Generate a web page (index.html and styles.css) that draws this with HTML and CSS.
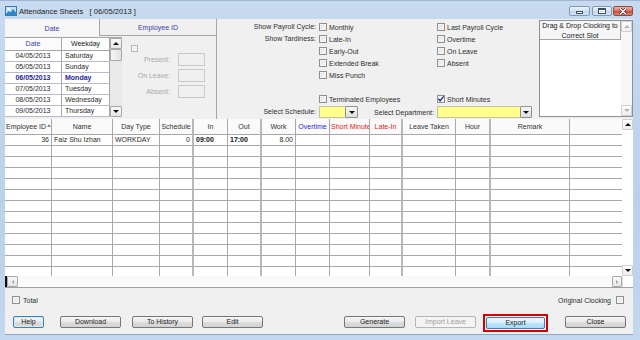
FILE: index.html
```html
<!DOCTYPE html>
<html lang="en">
<head>
<meta charset="utf-8">
<title>Attendance Sheets</title>
<link rel="stylesheet" href="styles.css">
</head>
<body>
<div class="window">
  <div class="titlebar">
    <svg class="app-icon" width="12" height="10" viewBox="0 0 12 10">
      <rect x="0.5" y="0.5" width="11" height="9" fill="#bfe0f6" stroke="#3a78b5"/>
      <path d="M1 8 L3.5 5 L5.5 6.5 L8 3 L11 6.5 L11 9.5 L1 9.5 Z" fill="#2f86c8"/>
      <circle cx="3.5" cy="3" r="1.2" fill="#ffffff"/>
    </svg>
    <span class="title-text">Attendance Sheets   [ 06/05/2013 ]</span>
    <div class="caption-buttons">
      <span class="cap-btn cap-min"><i></i></span>
      <span class="cap-btn cap-max"><i></i></span>
      <span class="cap-btn cap-close">
        <svg width="8" height="7" viewBox="0 0 8 7"><path d="M1 0.5 L7 6.5 M7 0.5 L1 6.5" stroke="#5a2020" stroke-width="2.6"/><path d="M1 0.5 L7 6.5 M7 0.5 L1 6.5" stroke="#ffffff" stroke-width="1.4"/></svg>
      </span>
    </div>
  </div>

  <div class="client">
    <div class="top">
      <div class="tabpanel">
        <div class="tabs">
          <div class="tab tab-active">Date</div>
          <div class="tab tab-idle">Employee ID</div>
        </div>
        <div class="tabbody">
          <div class="datelist">
            <div class="dates">
              <span class="dh dh-date">Date</span><span class="dh">Weekday</span>
              <span class="dd">04/05/2013</span><span class="dw">Saturday</span>
              <span class="dd">05/05/2013</span><span class="dw">Sunday</span>
              <span class="dd sel">06/05/2013</span><span class="dw sel">Monday</span>
              <span class="dd">07/05/2013</span><span class="dw">Tuesday</span>
              <span class="dd">08/05/2013</span><span class="dw">Wednesday</span>
              <span class="dd">09/05/2013</span><span class="dw">Thursday</span>
            </div>
            <div class="list-sb">
              <span class="sb-btn dark"><i class="tri-up"></i></span>
              <span class="sb-thumb"></span>
              <span class="sb-fill"></span>
              <span class="sb-btn dark"><i class="tri-down"></i></span>
            </div>
          </div>
          <div class="emppanel">
            <span class="box box-disabled emp-check"></span>
            <div class="emp-fields">
              <span class="emp-label">Present:</span><span class="emp-box"></span>
              <span class="emp-label">On Leave:</span><span class="emp-box"></span>
              <span class="emp-label">Absent:</span><span class="emp-box"></span>
            </div>
          </div>
        </div>
      </div>

      <div class="filters">
        <span class="f-label">Show Payroll Cycle:</span>
        <label class="chk"><span class="box"></span>Monthly</label>
        <label class="chk"><span class="box"></span>Last Payroll Cycle</label>

        <span class="f-label">Show Tardiness:</span>
        <label class="chk"><span class="box"></span>Late-In</label>
        <label class="chk"><span class="box"></span>Overtime</label>

        <span></span>
        <label class="chk"><span class="box"></span>Early-Out</label>
        <label class="chk"><span class="box"></span>On Leave</label>

        <span></span>
        <label class="chk"><span class="box"></span>Extended Break</label>
        <label class="chk"><span class="box"></span>Absent</label>

        <span></span>
        <label class="chk"><span class="box"></span>Miss Punch</label>
        <span></span>

        <span></span><span></span><span></span>

        <span></span>
        <label class="chk"><span class="box"></span>Terminated Employees</label>
        <label class="chk"><span class="box checked"><svg width="8" height="8" viewBox="0 0 8 8"><path d="M1.4 3.8 L3.1 5.8 L6.6 1.4" fill="none" stroke="#1d3f8f" stroke-width="1.4"/></svg></span>Short Minutes</label>

        <span class="f-label f-last">Select Schedule:</span>
        <div class="sched-cell">
          <span class="combo combo-sched"><span class="combo-field"></span><span class="combo-btn"><i class="tri-down"></i></span></span>
          <span class="dept-label">Select Department:</span>
        </div>
        <div class="dept-cell">
          <span class="combo combo-dept"><span class="combo-field"></span><span class="combo-btn"><i class="tri-down"></i></span></span>
        </div>
      </div>

      <div class="dragdrop">
        <div class="ddbox">
          <div class="ddmain">
            <div class="ddhead">Drag &amp; Drop Clocking to<br>Correct Slot</div>
          </div>
          <div class="ddsb">
            <span class="sb-btn light"><i class="tri-up tri-gray"></i></span>
            <span class="sb-btn light"><i class="tri-down tri-gray"></i></span>
          </div>
        </div>
      </div>
    </div>

    <div class="gridwrap">
      <div class="grid-area">
        <div class="grid">
          <div class="g-row g-head">
            <span class="h-left">Employee ID<i class="sort"></i></span>
            <span>Name</span>
            <span>Day Type</span>
            <span class="sep">Schedule</span>
            <span>In</span>
            <span class="sep">Out</span>
            <span>Work</span>
            <span class="c-blue">Overtime</span>
            <span class="c-red">Short Minute</span>
            <span class="sep c-red">Late-In</span>
            <span>Leave Taken</span>
            <span class="sep">Hour</span>
            <span>Remark</span>
            <span class="last"></span>
          </div>
          <div class="g-row">
            <span class="r">36</span>
            <span>Faiz Shu Izhan</span>
            <span>WORKDAY</span>
            <span class="sep r">0</span>
            <span class="b">09:00</span>
            <span class="sep b">17:00</span>
            <span class="r">8.00</span>
            <span></span><span></span><span class="sep"></span><span></span><span class="sep"></span><span></span><span class="last"></span>
          </div>
          <div class="g-row"><span></span><span></span><span></span><span class="sep"></span><span></span><span class="sep"></span><span></span><span></span><span></span><span class="sep"></span><span></span><span class="sep"></span><span></span><span class="last"></span></div>
          <div class="g-row"><span></span><span></span><span></span><span class="sep"></span><span></span><span class="sep"></span><span></span><span></span><span></span><span class="sep"></span><span></span><span class="sep"></span><span></span><span class="last"></span></div>
          <div class="g-row"><span></span><span></span><span></span><span class="sep"></span><span></span><span class="sep"></span><span></span><span></span><span></span><span class="sep"></span><span></span><span class="sep"></span><span></span><span class="last"></span></div>
          <div class="g-row"><span></span><span></span><span></span><span class="sep"></span><span></span><span class="sep"></span><span></span><span></span><span></span><span class="sep"></span><span></span><span class="sep"></span><span></span><span class="last"></span></div>
          <div class="g-row"><span></span><span></span><span></span><span class="sep"></span><span></span><span class="sep"></span><span></span><span></span><span></span><span class="sep"></span><span></span><span class="sep"></span><span></span><span class="last"></span></div>
          <div class="g-row"><span></span><span></span><span></span><span class="sep"></span><span></span><span class="sep"></span><span></span><span></span><span></span><span class="sep"></span><span></span><span class="sep"></span><span></span><span class="last"></span></div>
          <div class="g-row"><span></span><span></span><span></span><span class="sep"></span><span></span><span class="sep"></span><span></span><span></span><span></span><span class="sep"></span><span></span><span class="sep"></span><span></span><span class="last"></span></div>
          <div class="g-row"><span></span><span></span><span></span><span class="sep"></span><span></span><span class="sep"></span><span></span><span></span><span></span><span class="sep"></span><span></span><span class="sep"></span><span></span><span class="last"></span></div>
          <div class="g-row"><span></span><span></span><span></span><span class="sep"></span><span></span><span class="sep"></span><span></span><span></span><span></span><span class="sep"></span><span></span><span class="sep"></span><span></span><span class="last"></span></div>
          <div class="g-row"><span></span><span></span><span></span><span class="sep"></span><span></span><span class="sep"></span><span></span><span></span><span></span><span class="sep"></span><span></span><span class="sep"></span><span></span><span class="last"></span></div>
          <div class="g-row"><span></span><span></span><span></span><span class="sep"></span><span></span><span class="sep"></span><span></span><span></span><span></span><span class="sep"></span><span></span><span class="sep"></span><span></span><span class="last"></span></div>
          <div class="g-row"><span></span><span></span><span></span><span class="sep"></span><span></span><span class="sep"></span><span></span><span></span><span></span><span class="sep"></span><span></span><span class="sep"></span><span></span><span class="last"></span></div>
          <div class="g-row"><span></span><span></span><span></span><span class="sep"></span><span></span><span class="sep"></span><span></span><span></span><span></span><span class="sep"></span><span></span><span class="sep"></span><span></span><span class="last"></span></div>
        </div>
        <div class="grid-sb">
          <span class="sb-btn light"><i class="tri-up"></i></span>
          <span class="sb-btn light"><i class="tri-down"></i></span>
        </div>
      </div>
      <div class="hscroll">
        <span class="h-thumb"></span>
        <span class="sb-btn hbtn"><i class="tri-left"></i></span>
        <span class="h-track"></span>
        <span class="sb-btn hbtn hbtn-right"><i class="tri-right"></i></span>
        <span class="h-corner"></span>
      </div>
    </div>

    <div class="options">
      <label class="chk opt-total"><span class="box"></span>Total</label>
      <label class="chk opt-orig">Original Clocking<span class="box"></span></label>
    </div>

    <div class="buttons">
      <button class="btn btn-help">Help</button>
      <button class="btn btn-download">Download</button>
      <button class="btn btn-history">To History</button>
      <button class="btn btn-edit">Edit</button>
      <button class="btn btn-generate">Generate</button>
      <button class="btn btn-import" disabled>Import Leave</button>
      <span class="export-mark"><button class="btn btn-export">Export</button></span>
      <button class="btn btn-close">Close</button>
    </div>
  </div>
</div>
</body>
</html>
```
FILE: styles.css
```css
* { box-sizing: border-box; }
html, body { margin: 0; padding: 0; }
body {
  width: 640px;
  height: 340px;
  overflow: hidden;
  font-family: "Liberation Sans", Arial, sans-serif;
  font-size: 7px;
  color: #2a2a2a;
  background: #bcd2ea;
}

.window {
  width: 640px;
  height: 340px;
  display: flex;
  flex-direction: column;
  background: linear-gradient(#c7daf0, #bbd1ea 60%, #c3d7ee);
}

/* title bar */
.titlebar {
  height: 19px;
  display: flex;
  align-items: center;
  padding-left: 5px;
  border-top: 1px solid #9fb6d2;
}
.app-icon { display: block; margin-top: 2px; }
.title-text {
  margin-left: 2px;
  margin-top: 3px;
  font-size: 7.6px;
  color: #1b1b1b;
  white-space: pre;
}
.caption-buttons {
  margin-left: auto;
  margin-right: 7px;
  align-self: flex-start;
  margin-top: 5px;
  display: flex;
}
.cap-btn {
  height: 10px;
  width: 20px;
  border: 1px solid #7e98ba;
  border-radius: 2px;
  background: linear-gradient(#eef3fa, #d3e1f2 50%, #c3d5ec 51%, #d4e3f4);
  display: flex;
  align-items: center;
  justify-content: center;
}
.cap-min { width: 21px; margin-right: 2px; }
.cap-max { margin-right: 1px; }
.cap-min i {
  display: block;
  width: 7px;
  height: 3px;
  margin-top: 3px;
  background: #fff;
  border: 1px solid #3d4f68;
}
.cap-max i {
  display: block;
  width: 8px;
  height: 6px;
  border: 1px solid #3d4f68;
  border-top-width: 2px;
  box-shadow: inset 0 0 0 1px #fff;
}
.cap-close {
  border-color: #8e4a45;
  background: linear-gradient(#f0b0a0, #d9745e 50%, #c64a34 51%, #d8866e);
}
.cap-close svg { display: block; }

/* client */
.client {
  flex: 1;
  margin: 0 7px 6px 5px;
  background: #f0f0f0;
  display: flex;
  flex-direction: column;
  box-shadow: 0 1px 0 #8ea6c4;
}

.top {
  height: 100px;
  display: flex;
}

/* tab panel */
.tabpanel {
  width: 212px;
  border-right: 1px solid #a6a6a6;
  display: flex;
  flex-direction: column;
}
.tabs { display: flex; height: 17px; }
.tab {
  display: flex;
  align-items: center;
  justify-content: center;
  color: #3b43a6;
  padding-top: 1px;
}
.tab-active {
  width: 95px;
  border-right: 1px solid #a6a6a6;
  background: #f6f6f6;
}
.tab-idle {
  flex: 1;
  border-bottom: 1px solid #a6a6a6;
  background: #f0f0f0;
}
.tabbody { display: flex; flex: 1; padding-top: 1px; }

.datelist { display: flex; width: 117px; height: 80px; }
.dates {
  width: 105px;
  display: grid;
  grid-template-columns: 57px 48px;
  grid-template-rows: 13px repeat(6, 11px);
  background: #fff;
  border-top: 1px solid #a6a6a6;
  height: 80px;
}
.dates span {
  border-right: 1px solid #a6a6a6;
  border-bottom: 1px solid #b8bcc8;
  line-height: 10px;
  white-space: nowrap;
}
.dates .dh {
  text-align: center;
  line-height: 12px;
  color: #222;
  background: #fbfbfb;
  border-bottom-color: #a6a6a6;
}
.dates .dh-date { color: #3b43a6; }
.dd { text-align: center; }
.dw { padding-left: 3px; }
.sel { color: #26269a; font-weight: bold; }

.list-sb {
  width: 12px;
  height: 80px;
  display: flex;
  flex-direction: column;
  background: #e9e9e9;
  border-top: 1px solid #a6a6a6;
}
.sb-btn {
  height: 11px;
  flex: none;
  border: 1px solid #a8a8a8;
  border-radius: 1px;
  background: linear-gradient(#f9f9f9, #e6e6e6);
  display: flex;
  align-items: center;
  justify-content: center;
}
.sb-thumb {
  height: 12px;
  border: 1px solid #a8a8a8;
  border-radius: 1px;
  background: linear-gradient(90deg, #f6f6f6, #e2e2e2);
}
.sb-fill { flex: 1; }

.tri-up, .tri-down, .tri-left, .tri-right { display: block; width: 0; height: 0; }
.tri-up { border-left: 3px solid transparent; border-right: 3px solid transparent; border-bottom: 3px solid #111; }
.tri-down { border-left: 3px solid transparent; border-right: 3px solid transparent; border-top: 3px solid #111; }
.tri-left { border-top: 2px solid transparent; border-bottom: 2px solid transparent; border-right: 2px solid #9a9a9a; }
.tri-right { border-top: 2px solid transparent; border-bottom: 2px solid transparent; border-left: 2px solid #9a9a9a; }
.tri-gray.tri-up { border-bottom-color: #b5b5b5; }
.tri-gray.tri-down { border-top-color: #b5b5b5; }

/* employee panel */
.emppanel {
  flex: 1;
  padding: 8px 0 0 9px;
}
.emp-check { display: block; }
.emp-fields {
  margin-left: -9px;
  display: grid;
  grid-template-columns: 48px 27px;
  grid-auto-rows: 13px;
  column-gap: 8px;
  row-gap: 3px;
}
.emp-label {
  text-align: right;
  color: #a9a9a9;
  line-height: 13px;
}
.emp-box {
  border: 1px solid #c9c9c9;
  background: #f0f0f0;
}

/* checkbox */
.box {
  display: inline-block;
  width: 8px;
  height: 8px;
  flex: none;
  border: 1px solid #8f8f8f;
  background: linear-gradient(135deg, #dedede, #fbfbfb);
  box-shadow: inset 0 0 0 1px #f4f4f4;
  position: relative;
}
.box svg { position: absolute; left: -1px; top: -1px; display: block; }
.box.checked { background: #f8f8f8; }
.box.box-disabled { width: 7px; height: 7px; border-color: #b8b8b8; background: #f2f2f2; }

.chk {
  display: flex;
  align-items: center;
  gap: 2px;
  color: #2e2e2e;
  white-space: nowrap;
}

/* filters */
.filters {
  width: 322px;
  display: grid;
  grid-template-columns: 102px 118px 1fr;
  grid-template-rows: repeat(7, 12px) 14px;
  padding-top: 2px;
}
.f-label {
  text-align: right;
  padding-right: 3px;
  line-height: 12px;
  color: #2e2e2e;
  white-space: nowrap;
}
.f-label.f-last { line-height: 14px; }
.sched-cell, .dept-cell {
  display: flex;
  align-items: center;
}
.dept-label {
  margin-left: auto;
  padding-right: 3px;
  white-space: nowrap;
  color: #2e2e2e;
}
.combo { display: flex; height: 12px; }
.combo-field {
  background: #ffff8a;
  border: 1px solid #c4c4a0;
  border-right: none;
}
.combo-sched .combo-field { width: 26px; }
.combo-dept .combo-field { width: 83px; }
.combo-btn {
  width: 13px;
  border: 1px solid #8f8f8f;
  border-radius: 1px;
  background: linear-gradient(#f8f8f8, #dedede);
  display: flex;
  align-items: center;
  justify-content: center;
}
.combo-dept .combo-btn { width: 12px; }

/* drag & drop */
.dragdrop { width: 94px; padding-top: 1px; }
.ddbox {
  height: 97px;
  border: 1px solid #8c9099;
  background: #fff;
  display: flex;
}
.ddmain { flex: 1; }
.ddhead {
  height: 19px;
  border-right: 1px solid #a6a6a6;
  border-bottom: 1px solid #a6a6a6;
  background: #f6f6f6;
  text-align: center;
  line-height: 9.5px;
  color: #222;
}
.ddsb {
  width: 11px;
  display: flex;
  flex-direction: column;
  justify-content: space-between;
  background: #f6f6f6;
}
.sb-btn.light { border-color: #d0d0d0; background: linear-gradient(#fdfdfd, #eeeeee); }

/* data grid */
.gridwrap { display: flex; flex-direction: column; }
.grid-area {
  height: 157px;
  display: flex;
  background: #fff;
}
.grid { width: 617px; overflow: hidden; }
.g-row {
  display: grid;
  grid-template-columns: 47px 61px 47px 34px 34px 34px 34px 34px 40px 33px 53px 35px 79px 52px;
  height: 11px;
}
.g-row > span {
  border-right: 1px solid #a8a8a8;
  border-bottom: 1px solid #a8a8a8;
  padding: 0 2px;
  line-height: 10px;
  white-space: nowrap;
  overflow: hidden;
}
.g-row > span.sep { border-right: 2px solid #b8b8b8; }
.g-row > span.last { border-right: none; }
.g-head { height: 16px; background: #fafafa; }
.g-head > span {
  line-height: 15px;
  text-align: center;
  color: #333;
  padding: 0 1px;
}
.g-head > span.h-left { text-align: left; padding-left: 1px; }
.sort {
  display: inline-block;
  width: 0;
  height: 0;
  margin-left: 1px;
  vertical-align: 2px;
  border-left: 2px solid transparent;
  border-right: 2px solid transparent;
  border-bottom: 3px solid #8a8a8a;
}
.g-head .c-blue { color: #2b2bd6; }
.g-head .c-red { color: #e01b1b; }
.g-row > span.r { text-align: right; }
.g-row > span.b { font-weight: bold; color: #111; }

.grid-sb {
  width: 11px;
  display: flex;
  flex-direction: column;
  justify-content: space-between;
  background: #fff;
}

.hscroll {
  height: 12px;
  display: flex;
  border-bottom: 1px solid #a0a0a0;
  background: linear-gradient(#f7f7f7, #fdfdfd);
}
.h-thumb { width: 2px; background: #111; }
.hbtn { width: 11px; height: 11px; }
.hbtn.hbtn-right { width: 10px; }
.h-track { flex: 1; }
.h-corner { width: 11px; background: #fff; border-left: 1px solid #e2e2e2; }

/* options */
.options {
  height: 22px;
  display: flex;
  align-items: flex-start;
  padding: 8px 9px 0 7px;
}
.opt-total { gap: 3px; }
.opt-orig { margin-left: auto; gap: 5px; }

/* buttons */
.buttons {
  height: 24px;
  display: flex;
  align-items: flex-start;
  padding: 6px 0 0 8px;
}
.btn {
  height: 12px;
  width: 61px;
  padding: 0;
  border: 1px solid #767676;
  border-radius: 2px;
  background: linear-gradient(#f6f6f6, #e9e9e9 50%, #dddddd 51%, #d3d3d3);
  font-family: "Liberation Sans", Arial, sans-serif;
  font-size: 7px;
  color: #222;
  line-height: 10px;
  display: flex;
  align-items: center;
  justify-content: center;
}
.btn-help {
  width: 31px;
  border-color: #3c7fb1;
  box-shadow: inset 0 0 0 1px #d6ecfa;
  color: #1a1a1a;
}
.btn-download { margin-left: 16px; }
.btn-history { margin-left: 11px; }
.btn-edit { margin-left: 9px; }
.btn-generate { margin-left: 81px; }
.btn-import {
  margin-left: 10px;
  border-color: #b5b5b5;
  background: #f4f4f4;
  color: #a0a0a0;
}
.export-mark {
  margin-left: 7px;
  margin-top: -2px;
  width: 65px;
  height: 18px;
  border: 2px solid #d40000;
  padding: 1px;
  display: flex;
}
.btn-export {
  width: 100%;
  height: 12px;
  border-color: #3c7fb1;
  background: linear-gradient(#eaf6fd, #d9f0fc 50%, #bee6fd 51%, #a7d9f5);
}
.btn-close { margin-left: 17px; }
```
